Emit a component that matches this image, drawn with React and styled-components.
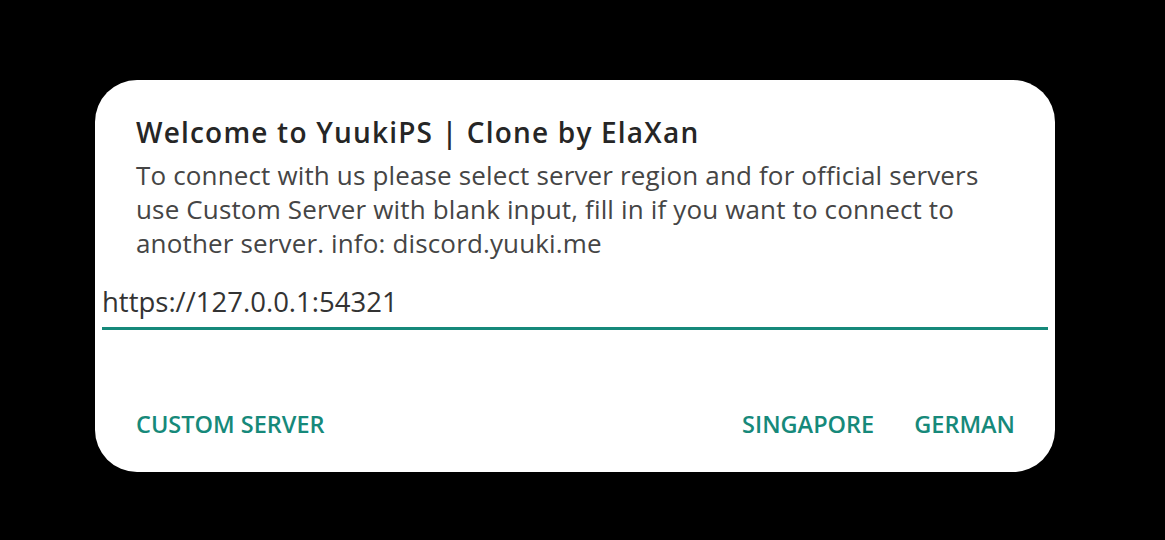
import React from 'react';
import styled, { createGlobalStyle } from 'styled-components';

const Global = createGlobalStyle`
  html, body {
    margin: 0;
    padding: 0;
    background: #000;
  }
  body {
    font-family: "Open Sans", Roboto, sans-serif;
  }
`;

const Screen = styled.div`
  width: 1165px;
  height: 540px;
  display: flex;
  align-items: flex-start;
  padding: 80px 0 0 95px;
  box-sizing: border-box;
  background: #000;
`;

const Card = styled.div`
  width: 960px;
  height: 392px;
  background: #fff;
  border-radius: 42px;
  box-sizing: border-box;
  padding: 34px 7px 0 7px;
  display: flex;
  flex-direction: column;
`;

const Header = styled.div`
  padding: 0 34px;
`;

const Title = styled.h2`
  margin: 0;
  font-size: 28px;
  font-weight: 600;
  letter-spacing: 1.2px;
  color: #262626;
  line-height: 36px;
`;

const Message = styled.p`
  margin: 8px 0 0;
  font-size: 26px;
  line-height: 34px;
  letter-spacing: 0.15px;
  color: #454545;
`;

const Field = styled.input`
  margin-top: 23px;
  height: 38px;
  border: none;
  border-bottom: 3px solid #16897a;
  outline: none;
  padding: 0 0 6px 0;
  font-family: "Open Sans", Roboto, sans-serif;
  font-size: 27.5px;
  line-height: 38px;
  color: #333;
  background: transparent;
  width: 100%;
`;

const Actions = styled.div`
  margin-top: 78px;
  padding: 0 33px 0 34px;
  display: flex;
  align-items: center;
  gap: 40px;
`;

const Spacer = styled.div`
  flex: 1;
`;

const Action = styled.button`
  border: none;
  background: none;
  padding: 0;
  font-family: "Open Sans", Roboto, sans-serif;
  font-size: 23.5px;
  font-weight: 600;
  color: #16897a;
  cursor: pointer;
`;

export default function App() {
  return (
    <>
      <Global />
      <Screen>
        <Card>
          <Header>
            <Title>Welcome to YuukiPS | Clone by ElaXan</Title>
            <Message>
              To connect with us please select server region and for official servers
              <br />
              use Custom Server with blank input, fill in if you want to connect to
              <br />
              another server. info: discord.yuuki.me
            </Message>
          </Header>
          <Field defaultValue="https://127.0.0.1:54321" />
          <Actions>
            <Action>CUSTOM SERVER</Action>
            <Spacer />
            <Action>SINGAPORE</Action>
            <Action>GERMAN</Action>
          </Actions>
        </Card>
      </Screen>
    </>
  );
}
